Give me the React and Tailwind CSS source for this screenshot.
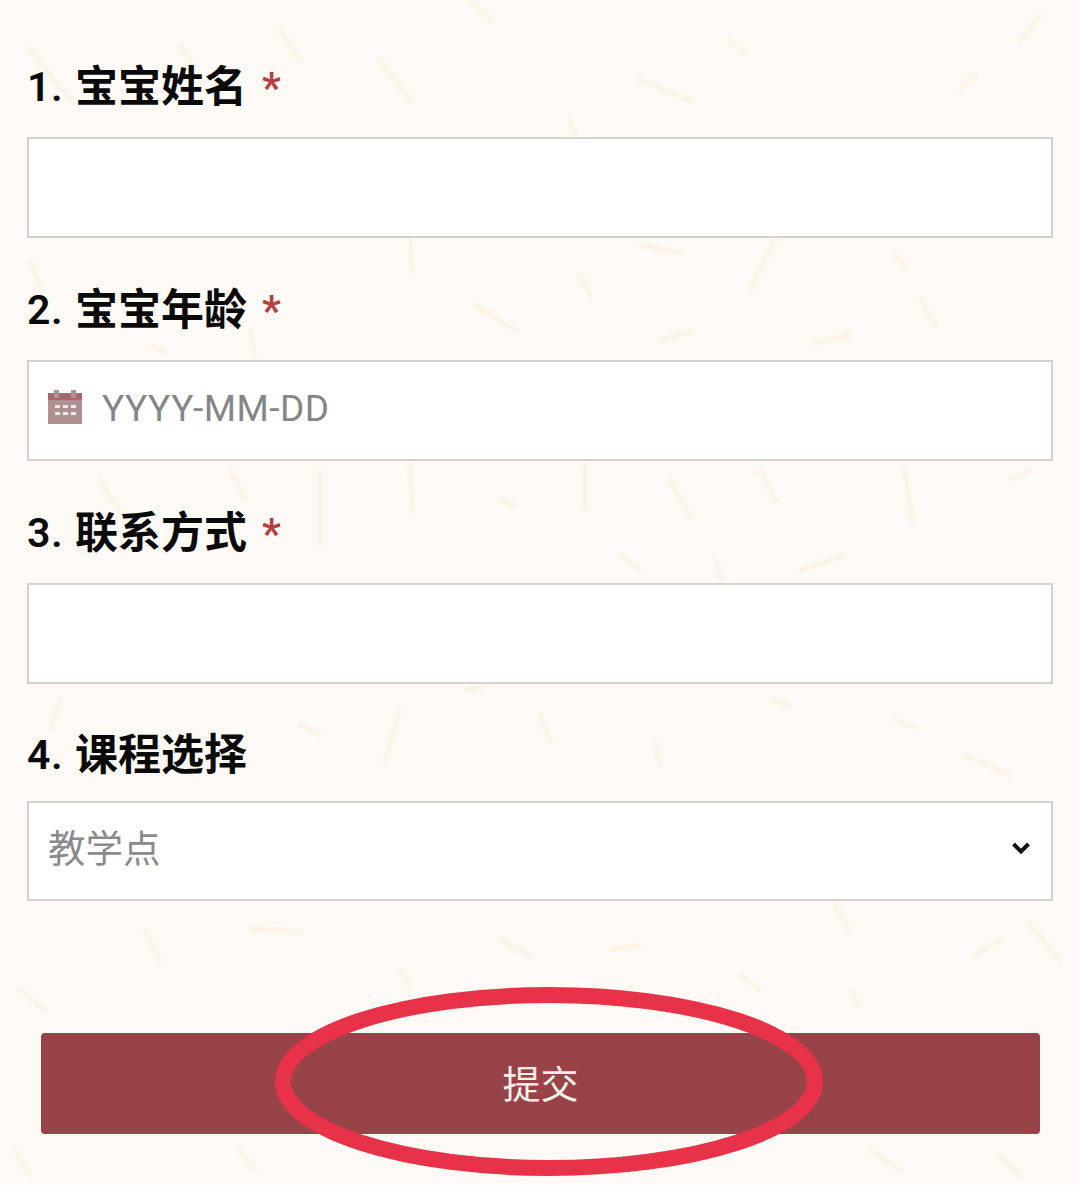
const font = { fontFamily: '"Roboto","Noto Sans CJK SC",sans-serif' };

const fibers = [
  [380,60,410,100],[640,80,690,100],[960,90,975,75],[1020,40,1040,15],[730,40,745,55],[570,120,575,135],
  [470,0,490,20],[30,50,70,100],[180,45,195,70],[280,30,300,60],
  [410,240,412,270],[750,290,775,240],[640,245,680,252],[895,255,905,268],[580,275,590,295],[475,305,515,330],
  [660,340,690,332],[815,342,850,335],[920,300,935,325],[250,330,255,355],[30,262,40,285],[150,345,165,352],
  [320,470,320,545],[410,465,412,510],[585,465,585,510],[905,470,912,520],[500,500,515,505],[670,480,690,515],
  [800,570,845,555],[715,560,722,580],[620,555,640,570],[760,470,775,500],[1010,480,1030,470],[100,480,125,520],[230,470,245,500],
  [465,690,490,685],[400,710,385,760],[655,740,660,765],[965,755,1010,775],[895,720,915,728],[300,725,320,735],[770,700,790,705],[540,715,550,740],[60,700,50,730],
  [145,930,160,960],[250,928,300,932],[500,940,530,955],[610,950,640,945],[835,905,850,930],[975,955,1000,940],[1030,925,1060,960],[400,970,410,985],[740,975,760,990],[20,990,45,1010],[850,990,858,1005],
  [15,1150,30,1175],[240,1150,255,1170],[870,1150,900,1170],[1000,1155,1020,1175],
];

function Star() {
  return <span className="ml-[15px] text-[#b5403f] text-[42px] font-semibold leading-none translate-y-[1px]">*</span>;
}

function Label({ n, text, required, className, shift = "-translate-y-[1px]" }) {
  return (
    <div className={`h-[50px] ${className}`}>
      <div className={`flex items-center h-full text-[43px] font-semibold text-[#0a0a0a] leading-none ${shift}`}>
        <span className="w-[48px] text-[41px] tracking-[0.5px]">{n}.</span>
        <span>{text}</span>
        {required && <Star />}
      </div>
    </div>
  );
}

function Box({ className = "h-[101px]", children }) {
  return (
    <div className={`border-2 border-[#d2d2d0] bg-white flex items-center ${className}`}>
      {children}
    </div>
  );
}

export default function App() {
  return (
    <div className="relative w-[1080px] h-[1185px] overflow-hidden bg-[#fdf9f4] pt-[63px]" style={font}>
      <svg className="absolute inset-0 blur-[1px]" width="1080" height="1185" viewBox="0 0 1080 1185" fill="none">
        {fibers.map(([a, b, c, d], i) => (
          <line key={i} x1={a} y1={b} x2={c} y2={d} stroke="#fbf2e4" strokeWidth="4" strokeLinecap="round" />
        ))}
      </svg>

      <div className="relative flex flex-col px-[27px]">
        <Label n="1" text="宝宝姓名" required className="mb-[24px]" />
        <Box />
        <Label n="2" text="宝宝年龄" required className="mt-[48px] mb-[24px]" />
        <Box className="h-[101px] pl-[19px]">
          <svg width="34" height="34" viewBox="0 0 34 34" className="shrink-0 -translate-y-[4px]">
            <path fill="#ae9092" d="M0 3h6V0h5v3h12V0h5v3h6v31H0z" />
            <path fill="#a6696d" d="M0 3h6v5h5V3h12v5h5V3h6v7H0z" />
            <path fill="#f3eaea" d="M7 15h5v3H7zM15 15h5v3h-5zM23 15h5v3h-5zM7 22h5v3H7zM15 22h5v3h-5zM23 22h5v3h-5z" />
          </svg>
          <span className="ml-[20px] text-[37px] text-[#858585] leading-none tracking-[0.5px] -translate-y-[2px]">YYYY-MM-DD</span>
        </Box>
        <Label n="3" text="联系方式" required className="mt-[48px] mb-[24px]" />
        <Box />
        <Label n="4" text="课程选择" shift="-translate-y-[2px]" className="mt-[48px] mb-[19px]" />
        <Box className="h-[100px] pl-[19px] pr-[20px] justify-between">
          <span className="text-[37.5px] text-[#8a8a8a] leading-none -translate-y-[1px]">教学点</span>
          <svg width="20" height="14" viewBox="0 0 20 14" fill="none" className="-translate-y-[3px]">
            <path d="M2.5 3l7.5 7.5L17.5 3" stroke="#111" strokeWidth="4" />
          </svg>
        </Box>
        <button className="mt-[132px] ml-[14px] mr-[13px] h-[101px] rounded-[4px] bg-[#984347] text-[#f7efe9] text-[38px] leading-none">
          <span className="block translate-y-[1px]">提交</span>
        </button>
      </div>

      <svg className="absolute left-0 top-0 pointer-events-none" width="1080" height="1185" fill="none">
        <ellipse cx="549" cy="1081.5" rx="266" ry="86.5" stroke="#e8324a" strokeWidth="16" />
      </svg>
    </div>
  );
}
